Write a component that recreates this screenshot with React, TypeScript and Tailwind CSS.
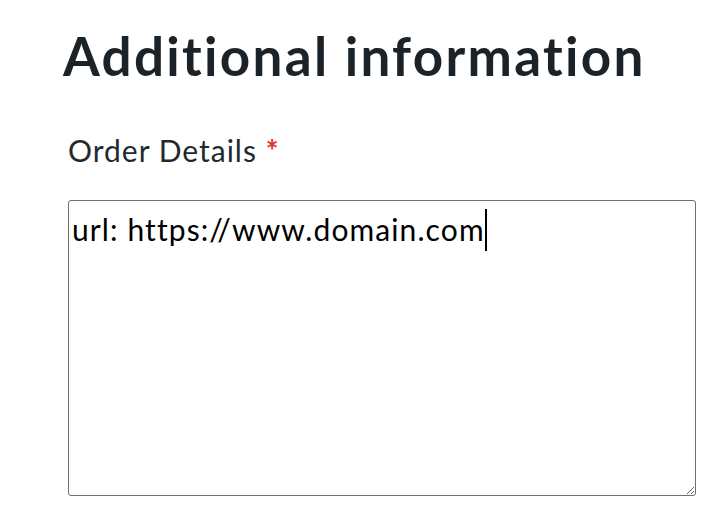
import React from "react";

export default function App() {
  return (
    <div className="w-[726px] h-[526px] bg-white overflow-hidden pl-[63px] pt-[24px]" style={{ fontFamily: "Lato, 'Noto Sans', sans-serif" }}>
      <h1 className="text-[53px] leading-[64px] font-bold text-[#1c2328] tracking-[2.3px]">Additional information</h1>
      <label className="block mt-[44px] ml-[5px] text-[30px] leading-[36px] text-[#1f2a30] tracking-[1px]">
        Order Details <span className="text-[#e4322b] font-bold">*</span>
      </label>
      <div className="relative mt-[32px] ml-[5px] w-[628px]">
        <textarea
          defaultValue="url: https://www.domain.com"
          className="block w-[628px] h-[296px] border border-[#6f6f6f] rounded-[3px] px-[3px] pt-[10px] text-[30px] leading-[36px] text-black outline-none resize-y tracking-[1.1px]"
          style={{ fontFamily: "Lato, 'Noto Sans', sans-serif" }}
        />
        <div className="absolute left-[417px] top-[9px] w-[2px] h-[42px] bg-black" />
      </div>
    </div>
  );
}
